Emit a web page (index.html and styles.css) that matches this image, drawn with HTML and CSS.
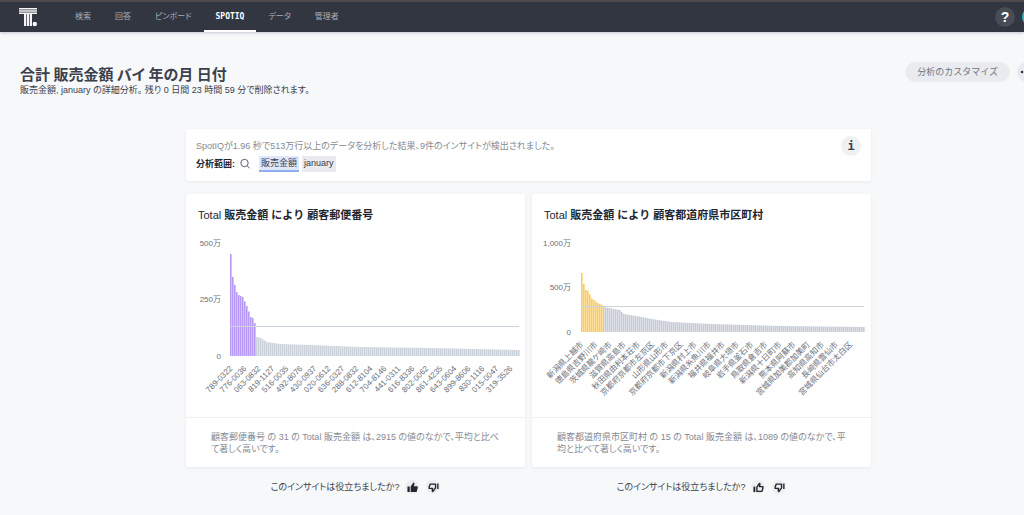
FILE: index.html
```
<!DOCTYPE html>
<html lang="ja">
<head>
<meta charset="utf-8">
<meta name="viewport" content="width=device-width, initial-scale=1">
<title>SpotIQ</title>
<link rel="stylesheet" href="styles.css">
</head>
<body>
<svg class="sprite" aria-hidden="true">
  <symbol id="thumb-up-filled" viewBox="0 0 24 24"><path d="M1 10h5v12H1zM8 10l6-9c2 0 3 2 2 4l-1 4h6c2 0 3 1 2.500 3l-2 8c-.4 1.500-1 2-2.500 2H8z" fill="currentColor"/></symbol>
  <symbol id="thumb-up" viewBox="0 0 24 24"><path d="M1 10h4v12H1z" fill="currentColor"/><path d="M8.500 11l5.500-8c1.500.5 1.500 2 1 3.500L14 10h7.500v3.500L19.500 20.500h-11z" fill="none" stroke="currentColor" stroke-width="3" stroke-linejoin="round"/></symbol>
  <symbol id="thumb-down" viewBox="0 0 24 24"><path d="M20 3h3v12h-3z" fill="currentColor"/><path d="M16.500 4.500v8.500l-6 8c-1.500-.5-1.500-2-1-3.500L10 14H2.500v-3L5 4.500z" fill="none" stroke="currentColor" stroke-width="3" stroke-linejoin="round"/></symbol>
</svg>

<header class="topbar">
  <a class="logo" href="#" aria-label="ホーム">
    <svg viewBox="0 0 20 20" width="20" height="20" fill="#f4f5f7">
      <path d="M1 1h18v1.500H1zM1 3.200h18v1.500H1zM1 5.400h18v1.500H1zM6 6.500h2.200V19H6zM8.900 6.500h2.200V19H8.900zM11.800 6.500H14V19h-2.200z"/>
      <circle cx="16.800" cy="17" r="2.200"/>
    </svg>
  </a>
  <nav class="nav">
    <a class="nav-link" href="#">検索</a>
    <a class="nav-link" href="#">回答</a>
    <a class="nav-link" href="#">ピンボード</a>
    <a class="nav-link nav-link-active" href="#">SPOTIQ</a>
    <a class="nav-link" href="#">データ</a>
    <a class="nav-link" href="#">管理者</a>
  </nav>
  <div class="topbar-actions">
    <button class="help" type="button">?</button>
    <button class="avatar" type="button" aria-label="プロフィール"></button>
  </div>
</header>

<div class="page-head">
  <div>
    <h1 class="page-title">合計 販売金額 バイ 年の月 日付</h1>
    <p class="page-sub">販売金額, january の詳細分析。 残り 0 日間 23 時間 59 分で削除されます。</p>
  </div>
  <div class="page-actions">
    <button class="customize" type="button">分析のカスタマイズ</button>
    <button class="more" type="button" aria-label="その他"><svg viewBox="0 0 20 20" width="20" height="20" fill="#32363f"><circle cx="5" cy="10" r="1.300"/><circle cx="10" cy="10" r="1.300"/><circle cx="15" cy="10" r="1.300"/></svg></button>
  </div>
</div>

<main class="content">
  <section class="summary">
    <div>
      <p class="summary-text">SpotIQが1.96 秒で513万行以上のデータを分析した結果、9件のインサイトが検出されました。</p>
      <div class="scope">
        <strong class="scope-label">分析範囲:</strong>
        <svg class="search-icon" viewBox="0 0 12 12" width="12" height="12" fill="none" stroke="#5b6270"><circle cx="5.500" cy="5" r="3.700"/><path d="M8.200 7.700l2.500 2.600"/></svg>
        <span class="token token-measure">販売金額</span>
        <span class="token">january</span>
      </div>
    </div>
    <button class="info" type="button">i</button>
  </section>

  <div class="insights">
    <article class="insight">
      <div class="card">
        <h2 class="card-title">Total <b>販売金額 により 顧客郵便番号</b></h2>
        <svg class="chart" id="postal-chart" viewBox="0 0 339 188" role="img" aria-label="顧客郵便番号"></svg>
        <p class="card-note">顧客郵便番号 の 31 の Total 販売金額 は、2915 の値のなかで、平均と比べて著しく高いです。</p>
      </div>
      <div class="feedback">
        <span>このインサイトは役立ちましたか?</span>
        <button class="vote" type="button" aria-label="はい"><svg width="11" height="11"><use href="#thumb-up-filled"/></svg></button>
        <button class="vote" type="button" aria-label="いいえ"><svg width="11" height="11"><use href="#thumb-down"/></svg></button>
      </div>
    </article>
    <article class="insight">
      <div class="card">
        <h2 class="card-title">Total <b>販売金額 により 顧客都道府県市区町村</b></h2>
        <svg class="chart" id="city-chart" viewBox="0 0 339 188" role="img" aria-label="顧客都道府県市区町村"></svg>
        <p class="card-note">顧客都道府県市区町村 の 15 の Total 販売金額 は、1089 の値のなかで、平均と比べて著しく高いです。</p>
      </div>
      <div class="feedback">
        <span>このインサイトは役立ちましたか?</span>
        <button class="vote" type="button" aria-label="はい"><svg width="11" height="11"><use href="#thumb-up"/></svg></button>
        <button class="vote" type="button" aria-label="いいえ"><svg width="11" height="11"><use href="#thumb-down"/></svg></button>
      </div>
    </article>
  </div>
</main>
<script src="charts.js"></script>
</body>
</html>
```
FILE: styles.css
```
* { box-sizing: border-box; }
body {
  margin: 0;
  min-height: 100vh;
  background: #f6f8fa;
  color: #3c404a;
  font-family: "Liberation Sans", "Noto Sans CJK JP", sans-serif;
  font-feature-settings: "palt";
  font-size: 9px;
  line-height: 12px;
  overflow-x: hidden;
}
h1, h2, p { margin: 0; }
button { border: 0; padding: 0; font: inherit; color: inherit; cursor: pointer; }
a { color: inherit; text-decoration: none; }
.sprite { display: none; }

.topbar {
  display: flex;
  align-items: center;
  height: 32px;
  padding-left: 18px;
  background: #323641;
  border-top: 2px solid #4c4a4a;
  box-shadow: 0 1px 3px #c3c8d0;
  overflow: hidden;
}
.logo { display: flex; width: 45px; }
.nav { display: flex; align-self: stretch; }
.nav-link {
  display: flex;
  align-items: center;
  padding: 2px 12px 0;
  border-bottom: 2px solid transparent;
  color: #a9adb7;
  font-size: 8px;
}
.nav-link-active {
  border-color: #ffffff;
  color: #ffffff;
  font-family: "DejaVu Sans Mono", monospace;
  font-weight: 700;
}
.topbar-actions { display: flex; gap: 7px; margin-left: auto; margin-right: -18px; }
.help { width: 20px; height: 20px; border-radius: 50%; background: #484c57; color: #ffffff; font-size: 14px; font-weight: 700; }
.avatar { width: 20px; height: 20px; border-radius: 50%; background: #2bb6b8; }

.page-head {
  display: flex;
  justify-content: space-between;
  padding: 30px 0 0 20px;
  overflow: hidden;
}
.page-title { padding-top: 2px; font-size: 15px; line-height: 20px; font-weight: 700; font-family: "Noto Sans CJK JP", sans-serif; }
.page-actions { display: flex; gap: 7px; margin-right: -13px; }
.customize { height: 20px; padding: 0 12px; border-radius: 10px; background: #e9ebef; color: #6f7480; font-feature-settings: normal; }
.more { display: flex; width: 20px; height: 20px; border-radius: 50%; background: #e6ebf1; }

.content { padding: 33px 153px 16px 186px; }
.summary, .card { background: #ffffff; box-shadow: 0 1px 3px #e6e9ee; border-radius: 2px; }
.summary { display: flex; justify-content: space-between; padding: 7px 10px 9px; }
.summary-text { padding-top: 4px; color: #858a94; }
.scope { display: flex; align-items: center; padding-top: 4px; }
.scope-label { color: #22262f; }
.search-icon { margin: 0 8px 0 4px; }
.token { padding: 1px 2px; margin-right: 3px; background: #e8eaf0; border-bottom: 2px solid #e8eaf0; }
.token-measure { background: #dfe7f8; border-color: #8fb0ee; }
.info { width: 20px; height: 20px; border-radius: 50%; background: #eff0f2; font-family: "DejaVu Sans Mono", monospace; font-size: 12px; font-weight: 700; }

.insights { display: grid; grid-template-columns: 1fr 1fr; gap: 7px; padding-top: 13px; }
.card-title { padding: 13px 12px 6px; font-size: 11px; line-height: 16px; font-weight: 400; font-feature-settings: normal; color: #22262f; }
.chart { display: block; width: 100%; height: auto; border-bottom: 1px solid #edeff2; }
.tick { fill: #6c707a; font-size: 8px; }
.average { stroke: #ccd3db; }
.card-note { padding: 13px 25px 12px; color: #858a94; }
.feedback { display: flex; align-items: center; justify-content: center; padding-top: 13px; }
.vote { display: flex; align-items: center; justify-content: center; width: 14px; height: 14px; margin-left: 6px; border-radius: 50%; background: #eceef2; color: #22262f; }
.vote + .vote { margin-left: 7px; }
```
FILE: charts.js
```
const NS = "http://www.w3.org/2000/svg";

function add(parent, tag, attrs, text) {
  const node = document.createElementNS(NS, tag);
  for (const key in attrs) node.setAttribute(key, attrs[key]);
  if (text) node.textContent = text;
  parent.appendChild(node);
}

// Linear interpolation between [offset, height] samples.
function heightAt(samples, x) {
  for (let i = 1; i < samples.length; i++) {
    const [x0, h0] = samples[i - 1];
    const [x1, h1] = samples[i];
    if (x <= x1) return h0 + (h1 - h0) * (x - x0) / (x1 - x0);
  }
  return samples[samples.length - 1][1];
}

function draw(id, o) {
  const svg = document.getElementById(id);
  for (let x = 0; x < o.width; x += 2) {
    const h = heightAt(o.samples, x);
    const fill = x < o.highWidth ? o.color : o.gray;
    add(svg, "rect", { x: o.left + x, y: o.base - h, width: 1.6, height: h, fill });
  }
  add(svg, "line", { class: "average", x1: o.left, x2: o.left + o.width, y1: o.average, y2: o.average });
  for (const [label, y] of o.ticks) {
    add(svg, "text", { class: "tick", x: o.tickX, y: y + 3, "text-anchor": "end" }, label);
  }
  o.labels.forEach((label, i) => {
    const x = o.left + 3 + i * o.step;
    const y = o.base + 13;
    add(svg, "text", { class: "tick", x, y, "text-anchor": "end", transform: `rotate(-45 ${x} ${y})` }, label);
  });
}

draw("postal-chart", {
  left: 44, width: 289, base: 127, average: 97.5, tickX: 35, highWidth: 26,
  color: "#b799f6", gray: "#ccd2d9", step: 14,
  samples: [[0, 102], [2, 79], [4, 71], [6, 64], [8, 61], [12, 59], [16, 50], [20, 39], [22, 38], [24, 33], [25, 32], [26, 19], [30, 18], [36, 14], [50, 12], [80, 11], [130, 9], [200, 8], [289, 6]],
  ticks: [["500万", 14], ["250万", 70], ["0", 127]],
  labels: ["789-0322", "776-0036", "063-0832", "819-1127", "516-0035", "492-8076", "430-0937", "020-0612", "636-0327", "288-0832", "612-8104", "704-8146", "441-0311", "616-8336", "802-0062", "861-4235", "643-0604", "899-8606", "830-1116", "015-0047", "319-3526"]
});

draw("city-chart", {
  left: 49, width: 283, base: 103, average: 77.5, tickX: 39, highWidth: 21,
  color: "#fccb58", gray: "#c6ccd6", step: 14.15,
  samples: [[0, 59], [2, 48], [4, 42], [7, 41], [9, 34], [12, 32], [16, 29], [20, 27], [22, 25], [38, 22], [42, 18], [55, 16], [70, 13], [90, 10], [130, 8], [200, 6], [283, 5]],
  ticks: [["1,000万", 14], ["500万", 58], ["0", 103]],
  labels: ["新潟県上越市", "徳島県吉野川市", "茨城県龍ケ崎市", "滋賀県高島市", "秋田県由利本荘市", "京都府京都市左京区", "山形県山形市", "京都府京都市下京区", "新潟県村上市", "新潟県糸魚川市", "福井県福井市", "岐阜県大垣市", "岩手県釜石市", "鳥取県倉吉市", "新潟県十日町市", "熊本県阿蘇市", "宮城県加美郡加美町", "高知県高知市", "長崎県雲仙市", "宮城県仙台市太白区"]
});
```
